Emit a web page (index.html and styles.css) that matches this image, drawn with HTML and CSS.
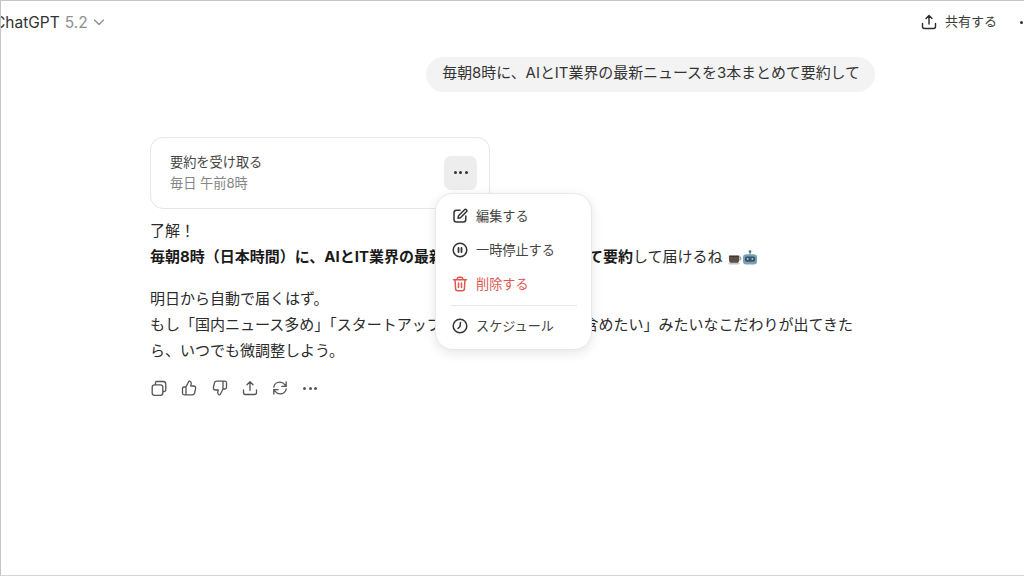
FILE: index.html
```html
<!DOCTYPE html>
<html lang="ja">
<head>
<meta charset="utf-8">
<title>ChatGPT</title>
<link rel="stylesheet" href="styles.css">
</head>
<body>
<div class="app">
  <header class="topbar">
    <div class="model"><span class="model-name">ChatGPT</span> <span class="model-ver">5.2</span>
      <svg class="chev" viewBox="0 0 12 12" width="12" height="12"><path d="M1.5 4l4.5 4.5L10.500 4" fill="none" stroke="#8a8a8a" stroke-width="1.200" stroke-linecap="round" stroke-linejoin="round"/></svg>
    </div>
    <div class="top-actions">
      <button class="share">
        <svg viewBox="0 0 16 16" width="16" height="16"><path d="M8 10V1.800M5 4.500l3-3 3 3M1.500 9.500v3a2 2 0 0 0 2 2h9a2 2 0 0 0 2-2v-3" fill="none" stroke="#2a2a2a" stroke-width="1.400" stroke-linecap="round" stroke-linejoin="round"/></svg>
        <span class="share-label">共有する</span>
      </button>
      <span class="more-top"><i></i><i></i><i></i></span>
    </div>
  </header>
  <main class="thread">
    <div class="user-row"><div class="bubble">毎朝8時に、AIとIT業界の最新ニュースを3本まとめて要約して</div></div>
    <section class="task-card">
      <div class="task-text">
        <div class="task-title">要約を受け取る</div>
        <div class="task-sub">毎日 午前8時</div>
      </div>
      <button class="dots-btn"><i></i><i></i><i></i></button>
      <div class="menu">
        <div class="menu-item">
          <svg viewBox="0 0 16 16" width="16" height="16"><path d="M8 2.200H4.500A2.500 2.500 0 0 0 2 4.700v6.800A2.500 2.500 0 0 0 4.500 14h6.800a2.500 2.500 0 0 0 2.500-2.500V8M6 10.200l.5-2.400 6-6a1.300 1.300 0 0 1 1.900 1.900l-6 6z" fill="none" stroke="#333" stroke-width="1.500" stroke-linecap="round" stroke-linejoin="round"/></svg>
          <span class="menu-label">編集する</span>
        </div>
        <div class="menu-item">
          <svg viewBox="0 0 16 16" width="16" height="16"><circle cx="8" cy="8" r="6.800" fill="none" stroke="#333" stroke-width="1.500"/><path d="M6.500 6v4M9.500 6v4" stroke="#333" stroke-width="1.800" stroke-linecap="round"/></svg>
          <span class="menu-label">一時停止する</span>
        </div>
        <div class="menu-item danger">
          <svg viewBox="0 0 16 16" width="16" height="16"><path d="M1.500 3.800h13M5.200 3.800V3a1.800 1.800 0 0 1 1.800-1.800h2A1.800 1.800 0 0 1 10.800 3v.8M3 3.800l.6 9a2 2 0 0 0 2 1.900h4.800a2 2 0 0 0 2-1.900l.6-9M6.500 7v4.500M9.500 7v4.500" fill="none" stroke="#e0574f" stroke-width="1.500" stroke-linecap="round" stroke-linejoin="round"/></svg>
          <span class="menu-label">削除する</span>
        </div>
        <div class="menu-sep"></div>
        <div class="menu-item">
          <svg viewBox="0 0 16 16" width="16" height="16"><circle cx="8" cy="8" r="6.800" fill="none" stroke="#333" stroke-width="1.500"/><path d="M8.500 4.500l-.5 4-2 2" fill="none" stroke="#333" stroke-width="1.500" stroke-linecap="round" stroke-linejoin="round"/></svg>
          <span class="menu-label">スケジュール</span>
        </div>
      </div>
    </section>
    <article class="answer">
      <p>了解！<br><strong>毎朝8時（日本時間）に、AIとIT業界の最新ニュースを3本まとめて要約</strong>して届けるね
        <svg class="emoji" viewBox="0 0 32 16" width="30" height="15"><path d="M1 6h11v4.500a4 4 0 0 1-4 4H5a4 4 0 0 1-4-4z" fill="#5d5048"/><path d="M0 13.500h13l-1.500 2h-10z" fill="#c9c5c0"/><path d="M12 7.500h1.500v3H12" fill="none" stroke="#8d8780"/><path d="M1.500 6.500h10" stroke="#2e2622"/><rect x="16" y="4.500" width="15" height="11" rx="3.500" fill="#7f9fb4"/><circle cx="23.500" cy="1.800" r="1.500" fill="#54768c"/><path d="M23.500 3v2" stroke="#54768c"/><rect x="18" y="7" width="11" height="5.500" rx="2" fill="#35566b"/><circle cx="21" cy="9.500" r="1" fill="#a8d8ee"/><circle cx="26" cy="9.500" r="1" fill="#a8d8ee"/></svg>
      </p>
      <p>明日から自動で届くはず。<br>もし「国内ニュース多め」「スタートアップ中心」「海外ニュース含めたい」みたいなこだわりが出てきたら、いつでも微調整しよう。</p>
    </article>
    <div class="actions">
      <svg viewBox="0 0 16 16" width="16" height="16"><path d="M5 1.500h7a2.800 2.800 0 0 1 2.800 2.800V10a1.500 1.500 0 0 1-1.500 1.500H11.800M3.500 4.800h6A2.300 2.300 0 0 1 11.800 7v6a2.300 2.300 0 0 1-2.300 2.300h-6A2.300 2.300 0 0 1 1.200 13V7a2.300 2.300 0 0 1 2.300-2.200zM4.500 4.800V3a1.500 1.500 0 0 1 .5-1.500" fill="none" stroke="#555" stroke-width="1.300" stroke-linecap="round" stroke-linejoin="round"/></svg>
      <svg viewBox="0 0 16 16" width="16" height="16"><path d="M5 7l2.600-5.200c.3-.6 1-.8 1.500-.5.900.5 1.300 1.400 1.100 2.400L9.800 6h2.900c1.300 0 2.200 1.200 1.900 2.400l-1 4.600c-.3 1.100-1.200 1.800-2.300 1.800H5M5 7v7.800M5 7H3a1.500 1.500 0 0 0-1.500 1.500v4.800A1.500 1.500 0 0 0 3 14.800h2" fill="none" stroke="#555" stroke-width="1.300" stroke-linecap="round" stroke-linejoin="round"/></svg>
      <svg viewBox="0 0 16 16" width="16" height="16"><path d="M11 9l-2.600 5.200c-.3.600-1 .8-1.500.5-.9-.5-1.300-1.400-1.100-2.400l.4-2.300H3.300C2 10 1.100 8.800 1.400 7.600l1-4.600C2.700 1.900 3.600 1.200 4.700 1.200H11M11 9V1.200M11 9h2a1.500 1.500 0 0 0 1.500-1.500V2.700A1.500 1.500 0 0 0 13 1.200h-2" fill="none" stroke="#555" stroke-width="1.300" stroke-linecap="round" stroke-linejoin="round"/></svg>
      <svg viewBox="0 0 16 16" width="16" height="16"><path d="M8 10.500V1.800M5 4.700l3-3 3 3M1.500 10v2.500a2 2 0 0 0 2 2h9a2 2 0 0 0 2-2V10" fill="none" stroke="#555" stroke-width="1.300" stroke-linecap="round" stroke-linejoin="round"/></svg>
      <svg viewBox="0 0 16 16" width="16" height="16"><path d="M1.800 7.200A6 6 0 0 1 7.800 2.200c2 0 3.800 1 5 2.500l1.400 1.700M14.200 2v4.400H9.800M14.200 8.800a6 6 0 0 1-6 5c-2 0-3.800-1-5-2.500L1.800 9.600M1.800 14V9.600h4.400" fill="none" stroke="#555" stroke-width="1.300" stroke-linecap="round" stroke-linejoin="round"/></svg>
      <span class="more-act"><i></i><i></i><i></i></span>
    </div>
  </main>
</div>
</body>
</html>
```
FILE: styles.css
```css
* { box-sizing: border-box; }
html, body { margin: 0; padding: 0; height: 100%; background: #fff; overflow: hidden; }
body {
  font-family: Inter, "Noto Sans CJK JP", "Liberation Sans", sans-serif;
  color: #1f1f1f;
}
.app {
  width: 1024px;
  height: 576px;
  border-top: 1px solid #c4c4c4;
  border-left: 1px solid #c4c4c4;
  border-bottom: 1px solid #d5d5d5;
  overflow: hidden;
}
.topbar {
  height: 42px;
  display: flex;
  align-items: center;
  justify-content: space-between;
}
.model {
  display: flex;
  align-items: center;
  gap: 5px;
  margin-left: -7px;
  font-size: 15.500px;
  white-space: nowrap;
}
.model-name { color: #333; }
.model-ver { color: #8f8f8f; }
.top-actions { display: flex; align-items: center; gap: 23px; margin-right: -10px; }
.share {
  display: flex;
  align-items: center;
  gap: 8px;
  border: 0;
  padding: 0;
  background: none;
  font: inherit;
  font-size: 13px;
  color: #3a3a3a;
}
.share-label { padding-bottom: 3px; }
.more-top, .more-act, .dots-btn { display: flex; align-items: center; gap: 2.500px; }
.more-top i, .more-act i, .dots-btn i { display: block; width: 3px; height: 3px; border-radius: 50%; background: #333; }
.thread { width: 725px; margin-left: 149px; padding-top: 14px; }
.user-row { display: flex; justify-content: flex-end; }
.bubble {
  height: 35px;
  line-height: 33px;
  padding: 0 15px 0 16px;
  border-radius: 18px;
  background: #f3f3f3;
  font-size: 14.930px;
  color: #333;
  white-space: nowrap;
}
.task-card {
  position: relative;
  width: 340px;
  height: 72px;
  margin-top: 45px;
  padding: 0 12px 0 19px;
  border: 1px solid #e6e6e6;
  border-radius: 13px;
  display: flex;
  align-items: center;
  justify-content: space-between;
}
.task-title { font-size: 13.200px; line-height: 20px; color: #444; }
.task-sub { font-size: 13.200px; line-height: 22px; color: #858585; }
.dots-btn {
  width: 33px;
  height: 34px;
  justify-content: center;
  border: 0;
  padding: 0 0 1px;
  border-radius: 7px;
  background: #ededed;
}
.menu {
  position: absolute;
  left: 284px;
  top: 55px;
  width: 157px;
  height: 157px;
  padding: 5px 0;
  background: #fff;
  border: 1px solid #e8e8e8;
  border-radius: 18px;
  box-shadow: 0 3px 12px rgba(0, 0, 0, 0.1);
  z-index: 2;
}
.menu-item {
  display: flex;
  align-items: center;
  gap: 8px;
  height: 34px;
  padding-left: 16px;
  font-size: 13.150px;
  color: #444;
}
.menu-label { padding-bottom: 2px; }
.menu-item.danger { color: #e0574f; }
.menu-sep { height: 1px; margin: 4px 14px 3px; background: #e6e6e6; }
.answer { font-size: 15px; line-height: 26px; color: #2a2a2a; padding: 9px 12px 0 0; }
.answer p { margin: 0 0 16px; }
.answer strong { font-weight: 700; color: #1a1a1a; }
.emoji { vertical-align: -3px; margin-left: 1px; }
.actions { display: flex; align-items: center; gap: 14.300px; margin-top: -2px; padding-left: 1px; height: 20px; }
.more-act { margin-left: 1px; }
.more-act i { background: #555; }
```
